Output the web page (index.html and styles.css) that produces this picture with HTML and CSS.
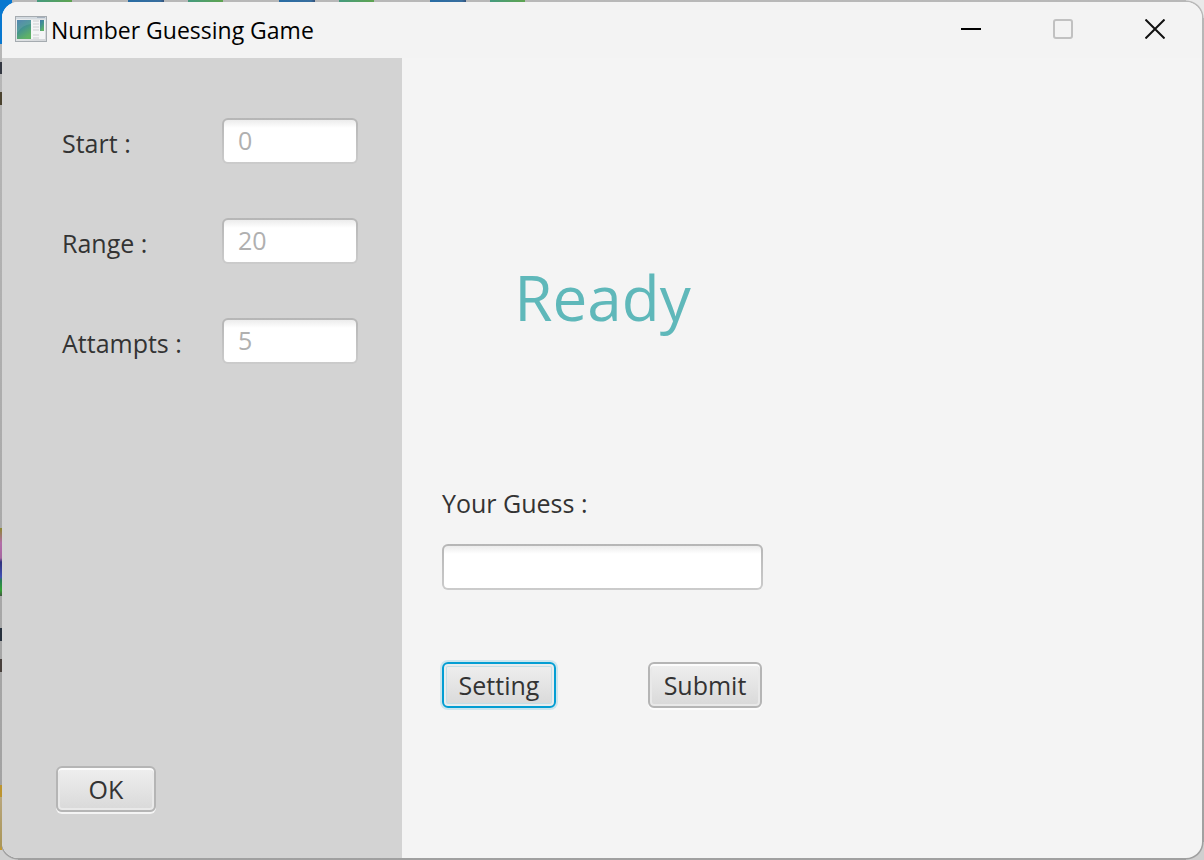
FILE: index.html
```html
<!DOCTYPE html>
<html lang="en">
<head>
<meta charset="utf-8">
<title>Number Guessing Game</title>
<link rel="stylesheet" href="styles.css">
</head>
<body>
<div class="window">
  <header class="titlebar">
    <svg class="app-icon" viewBox="0 0 32 26" aria-hidden="true">
      <defs>
        <linearGradient id="pane" x1="0" y1="0" x2="0.5" y2="1"><stop offset="0" stop-color="#4079a8"/><stop offset="0.5" stop-color="#439291"/><stop offset="1" stop-color="#5fb266"/></linearGradient>
        <linearGradient id="frame" x1="0" y1="0" x2="1" y2="1"><stop offset="0" stop-color="#eceff1"/><stop offset="1" stop-color="#d3d6d9"/></linearGradient>
      </defs>
      <rect x="0.5" y="0.5" width="31" height="25" fill="url(#frame)" stroke="#a5abb0"/>
      <path d="M1 1h30v2H1z" fill="#d3dae0"/>
      <path d="M22 1h8v1h-8z" fill="#a5b1be"/>
      <path d="M2 4h28v19H2z" fill="#f4f5f6"/>
      <path d="M2 4h14v19H2z" fill="url(#pane)"/>
      <path d="M2 4h14v4Q7 9 2 17z" fill="#fff" opacity=".1"/>
      <path d="M18 5h6M18 8h6M18 11h6M18 14h6M18 19h6M18 22h6" stroke="#cbced0"/>
      <path d="M25 4h4v11h-4z" fill="url(#pane)"/>
    </svg>
    <h1 class="title">Number Guessing Game</h1>
    <div class="controls">
      <button class="control" type="button" aria-label="Minimize"><svg width="20" height="20" viewBox="0 0 20 20"><path d="M0 10h20" stroke="#000" stroke-width="2"/></svg></button>
      <button class="control" type="button" aria-label="Maximize" disabled><svg width="20" height="20" viewBox="0 0 20 20"><rect x="1" y="1" width="18" height="18" rx="2" fill="none" stroke="#c1c1c1" stroke-width="2"/></svg></button>
      <button class="control" type="button" aria-label="Close"><svg width="20" height="20" viewBox="0 0 20 20"><path d="M.5.5l19 19M19.500.5l-19 19" stroke="#111" stroke-width="2"/></svg></button>
    </div>
  </header>
  <div class="content">
    <form class="sidebar">
      <div class="fields">
        <label class="label" for="start">Start :</label><input class="field" id="start" type="text" placeholder="0">
        <label class="label" for="range">Range :</label><input class="field" id="range" type="text" placeholder="20">
        <label class="label" for="attempts">Attampts :</label><input class="field" id="attempts" type="text" placeholder="5">
      </div>
      <button class="button button-ok" type="button">OK</button>
    </form>
    <main class="main">
      <form class="game">
        <p class="status">Ready</p>
        <label class="label" for="guess">Your Guess :</label>
        <input class="field" id="guess" type="text">
        <div class="actions">
          <button class="button button-active" type="button">Setting</button>
          <button class="button" type="button">Submit</button>
        </div>
      </form>
    </main>
  </div>
</div>
</body>
</html>
```
FILE: styles.css
```css
* { box-sizing: border-box; }

body {
  margin: 0;
  padding: 2px;
  min-height: 100vh;
  display: flex;
  font-family: "Open Sans", "Noto Sans", sans-serif;
  font-size: 25px;
  color: #333;
  background:
    linear-gradient(90deg, transparent 37px, #459a7e 37px, #5ea450 72px, transparent 72px, transparent 128px, #286ca4 128px, #386e9e 160px, #34517a 164px, transparent 164px, transparent 188px, #459a7e 188px, #5ea450 223px, transparent 223px, transparent 279px, #286ca4 279px, #386e9e 311px, #34517a 315px, transparent 315px, transparent 339px, #459a7e 339px, #5ea450 374px, transparent 374px, transparent 430px, #286ca4 430px, #386e9e 462px, #34517a 466px, transparent 466px, transparent 490px, #459a7e 490px, #5ea450 525px, transparent 525px) 0 0 / 100% 2px no-repeat,
    linear-gradient(#0878d0 44px, transparent 44px, transparent 62px, #343842 62px, #343842 74px, transparent 74px, transparent 92px, #4b432f 92px, #4b432f 105px, transparent 105px, transparent 528px, #8c8830 528px, #b36ca8 543px, #a567a0 558px, #30327c 562px, #4050b5 577px, #287c58 580px, #32a232 590px, #435743 596px, transparent 596px, transparent 628px, #26303c 628px, #26303c 641px, transparent 641px, transparent 659px, #48403c 659px, #48403c 672px, transparent 672px, transparent 785px, #bc942f 785px, #bc942f 797px, #b8a67c 797px, #aa9658 846px, #d09b22 850px, transparent 850px) 0 0 / 2px 100% no-repeat,
    linear-gradient(90deg, #0878d0, #0878d0) 0 0 / 12px 14px no-repeat,
    radial-gradient(circle at 0 100%, transparent 17px, #e9e9e9 18px) 100% 0 / 18px 18px no-repeat,
    radial-gradient(circle at 0 0, transparent 17px, #cfcfcf 18px) 100% 100% / 18px 18px no-repeat,
    radial-gradient(circle at 100% 0, transparent 17px, #cfcfcf 18px) 0 100% / 18px 18px no-repeat,
    linear-gradient(#b8b8b8, #a0a0a0);
}

.window {
  flex: 1;
  display: flex;
  flex-direction: column;
  overflow: hidden;
  border-radius: 16px;
  background: #f4f4f4;
}

.titlebar {
  display: flex;
  align-items: center;
  height: 56px;
  padding-left: 13px;
  background: #f3f3f3;
}

.app-icon { width: 32px; height: 26px; margin: 0 4px 2px 0; }

.title {
  margin: 0;
  font-size: 23px;
  font-weight: 400;
  color: #000;
}

.controls { display: flex; margin-left: auto; padding-right: 1px; }

.control {
  display: flex;
  align-items: center;
  justify-content: center;
  width: 92px;
  height: 56px;
  padding: 0 0 2px;
  border: 0;
  background: none;
}

.content { flex: 1; display: flex; }

.sidebar {
  flex: 0 0 400px;
  display: flex;
  flex-direction: column;
  justify-content: space-between;
  align-items: flex-start;
  padding: 60px 44px 46px 54px;
  background: #d3d3d3;
}

.fields {
  display: grid;
  grid-template-columns: 160px 136px;
  row-gap: 54px;
  align-items: center;
  padding-left: 6px;
}

.label { line-height: 32px; white-space: nowrap; }
.fields .label { padding-top: 4px; }

.field {
  width: 100%;
  height: 46px;
  padding: 0 14px 2px;
  border: 2px solid transparent;
  border-radius: 6px;
  background:
    linear-gradient(#ececec, #fff 8px) padding-box,
    linear-gradient(#b6b6b6, #cbcbcb) border-box;
  font: inherit;
  color: #333;
}

.field::placeholder { color: #b0b0b0; opacity: 1; }

.button {
  height: 46px;
  min-width: 100px;
  padding: 0 14px;
  border: 2px solid #b5b5b5;
  border-radius: 6px;
  background: linear-gradient(#efefef, #d9d9d9);
  box-shadow: inset 0 2px #fcfcfc, inset 0 0 0 2px #e9e9e9, 0 2px rgba(255, 255, 255, .75);
  font: inherit;
  line-height: 32px;
  color: #333;
}

.button-active {
  border-color: #039ed3;
  box-shadow: inset 0 0 0 2px #e9eced, inset 0 0 0 3px #c3dfe7, 0 0 0 2px #cce6ee;
}

.main { flex: 1; padding: 0 40px; }

.game {
  display: flex;
  flex-direction: column;
  width: 321px;
  padding-top: 195px;
}

.status {
  margin: 0 0 146px;
  font-size: 62px;
  line-height: 88px;
  text-align: center;
  color: #5fb8ba;
}

.game .field { margin: 25px 0 72px; }

.actions { display: flex; gap: 92px; }
.actions .button { width: 114px; padding: 0; }
```
